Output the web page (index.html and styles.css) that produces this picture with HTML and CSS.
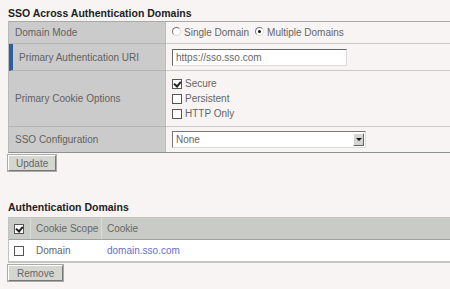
FILE: index.html
```html
<!DOCTYPE html>
<html>
<head>
<meta charset="utf-8">
<link rel="stylesheet" href="styles.css">
</head>
<body>
<div class="page">
  <h2 class="section-title">SSO Across Authentication Domains</h2>
  <div class="form">
    <div class="label">Domain Mode</div>
    <div class="value">
      <label class="opt"><span class="radio"></span>Single Domain</label>
      <label class="opt"><span class="radio on"></span>Multiple Domains</label>
    </div>
    <div class="label req">Primary Authentication URI</div>
    <div class="value">
      <div class="input">https://sso.sso.com</div>
    </div>
    <div class="label">Primary Cookie Options</div>
    <div class="value stack">
      <label class="opt"><span class="check on"></span>Secure</label>
      <label class="opt"><span class="check"></span>Persistent</label>
      <label class="opt"><span class="check"></span>HTTP Only</label>
    </div>
    <div class="label">SSO Configuration</div>
    <div class="value">
      <div class="select"><span>None</span><span class="arrow"></span></div>
    </div>
  </div>
  <div class="actions"><button class="btn">Update</button></div>

  <h2 class="section-title second">Authentication Domains</h2>
  <div class="grid">
    <div class="row head">
      <div class="cell c1"><span class="check on"></span></div>
      <div class="cell c2">Cookie Scope</div>
      <div class="cell c3">Cookie</div>
    </div>
    <div class="row body">
      <div class="cell c1"><span class="check"></span></div>
      <div class="cell c2">Domain</div>
      <div class="cell c3"><a class="link">domain.sso.com</a></div>
    </div>
  </div>
  <div class="actions small"><button class="btn">Remove</button></div>
</div>
</body>
</html>
```
FILE: styles.css
```css
html, body {
  margin: 0;
  padding: 0;
  background: #f7f4f3;
  font-family: "Liberation Sans", Arial, sans-serif;
  font-size: 10px;
  color: #666;
  overflow: hidden;
}
.page {
  padding: 6px 0 0 8px;
  width: 460px;
}
.section-title {
  margin: 0;
  font-size: 10.5px;
  font-weight: bold;
  color: #222;
  line-height: 14px;
  height: 15px;
}
.section-title.second {
  margin-top: 27px;
  height: 14px;
}
.form {
  display: grid;
  grid-template-columns: 157px 1fr;
  border-top: 1px solid #a8aaa8;
  border-bottom: 1px solid #8f938f;
  border-left: 1px solid #b9b9b9;
}
.label {
  background: #cbcbcb;
  color: #626262;
  display: flex;
  align-items: center;
  padding-left: 6px;
  border-bottom: 1px solid #b5b5b5;
  border-right: 1px solid #bdbdbd;
  white-space: nowrap;
}
.label.req {
  border-left: 4px solid #2f5f9a;
  padding-left: 6px;
}
.label:nth-last-child(2) { border-bottom: 0; }
.value {
  display: flex;
  align-items: center;
  gap: 6px;
  padding-left: 6px;
  border-bottom: 1px solid #c9c9c9;
  color: #666;
}
.value:last-child { border-bottom: 0; }
.form > :nth-child(1), .form > :nth-child(2) { height: 21px; }
.form > :nth-child(3), .form > :nth-child(4) { height: 26px; }
.form > :nth-child(5), .form > :nth-child(6) { height: 55px; }
.form > :nth-child(7), .form > :nth-child(8) { height: 25px; }
.value.stack {
  flex-direction: column;
  align-items: flex-start;
  justify-content: center;
  gap: 3px;
}
.opt {
  display: flex;
  align-items: center;
  gap: 3px;
  line-height: 12px;
  white-space: nowrap;
}
.radio {
  width: 9px;
  height: 9px;
  border-radius: 50%;
  border: 1px solid #777;
  border-right-color: #ddd;
  border-bottom-color: #ddd;
  background: #fff;
  position: relative;
  box-sizing: border-box;
  margin-top: -2px;
}
.radio.on::after {
  content: "";
  position: absolute;
  left: 2px;
  top: 2px;
  width: 3px;
  height: 3px;
  border-radius: 50%;
  background: #111;
}
.check {
  display: inline-block;
  width: 10px;
  height: 10px;
  box-sizing: border-box;
  border: 1px solid #555;
  background: #fff;
  position: relative;
}
.check.on::after {
  content: "";
  position: absolute;
  left: 2px;
  top: 0px;
  width: 3px;
  height: 5px;
  border: solid #222;
  border-width: 0 2px 2px 0;
  transform: rotate(40deg);
}
.input {
  width: 175px;
  height: 17px;
  box-sizing: border-box;
  background: #fff;
  border-top: 1px solid #666;
  border-left: 1px solid #666;
  border-right: 1px solid #ddd;
  border-bottom: 1px solid #ddd;
  padding: 2px 0 0 3px;
  line-height: 12px;
  color: #666;
  margin-top: 1px;
}
.select {
  width: 194px;
  height: 17px;
  box-sizing: border-box;
  background: #fff;
  border-top: 1px solid #777;
  border-left: 1px solid #777;
  border-right: 1px solid #ddd;
  border-bottom: 1px solid #ddd;
  display: flex;
  align-items: center;
  justify-content: space-between;
  padding-left: 3px;
  color: #666;
}
.arrow {
  width: 11px;
  height: 13px;
  background: #d4d4d0;
  border: 1px solid #fff;
  border-right-color: #666;
  border-bottom-color: #666;
  box-sizing: border-box;
  margin-right: 1px;
  position: relative;
}
.arrow::after {
  content: "";
  position: absolute;
  left: 2px;
  top: 4px;
  border-left: 3px solid transparent;
  border-right: 3px solid transparent;
  border-top: 3px solid #111;
}
.actions { padding-top: 2px; height: 18px; }
.btn {
  font-family: "Liberation Sans", Arial, sans-serif;
  font-size: 10px;
  color: #666;
  background: #d5d6d0;
  border: 1px solid #fff;
  border-right-color: #777;
  border-bottom-color: #777;
  outline: 1px solid #aaa;
  outline-offset: 0;
  height: 16px;
  padding: 0 7px;
  line-height: 13px;
  margin: 0;
}
.grid {
  margin-top: 3px;
  border-left: 1px solid #c2c2c2;
}
.row {
  display: flex;
  align-items: center;
}
.row.head {
  background: #c9ccc6;
  height: 21px;
  border-top: 1px solid #c2c5c0;
  border-bottom: 1px solid #9fa39f;
}
.row.body {
  background: #fff;
  height: 21px;
  border-bottom: 2px solid #c4c6c4;
}
.cell { display: flex; align-items: center; height: 100%; box-sizing: border-box; white-space: nowrap; }
.c1 { width: 22px; padding-left: 5px; }
.c2 { width: 71px; padding-left: 5px; }
.c3 { padding-left: 5px; }
.row.head .c1, .row.head .c2 { border-right: 1px solid #dadcd8; }
.row.body .c1, .row.body .c2 { border-right: 1px solid transparent; }
.link { color: #6670c8; text-decoration: none; }
.actions.small { padding-top: 2px; }
.actions.small .btn { padding: 0 8px; }
```
